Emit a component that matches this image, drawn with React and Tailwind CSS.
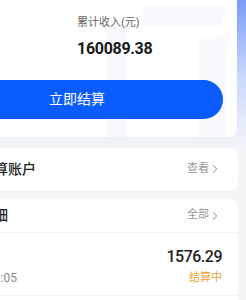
import { ChevronRight } from 'lucide-react';

const font = { fontFamily: 'Roboto, "Noto Sans CJK SC", sans-serif' };

const Watermark = () => (
  <svg className="absolute right-0 top-0" width="150" height="137" viewBox="0 0 150 137" fill="none">
    <path d="M20 26 h20 v111 h-20 z" fill="#f7f9fd" />
    <path d="M56 6 h84 l-6 20 h-78 z" fill="#f8f9fd" />
    <path d="M112 40 l28 -8 v105 h-28 z" fill="#f8fafd" />
  </svg>
);

const More = ({ label }) => (
  <div className="flex items-center text-[11px] text-[#999]">
    <span>{label}</span>
    <ChevronRight size={14} strokeWidth={1.3} className="ml-[-1px] text-[#666]" />
  </div>
);

const Row = ({ title, time, amount, status }) => (
  <div className="flex justify-between px-4 pt-[13px] h-[63px] border-b border-[#f3f3f3]">
    <div className="flex flex-col">
      <span className="text-[14px] leading-[22px] text-[#222]">{title}</span>
      <div className="w-[65px] flex justify-end whitespace-nowrap mt-[2px] text-[12px] leading-[16px] text-[#888]">
        {time}
      </div>
    </div>
    <div className="flex flex-col items-end">
      <span className="text-[16px] leading-[22px] font-medium tracking-[-0.5px] text-[#1f1f1f]">{amount}</span>
      <span className="mt-[2px] text-[11px] leading-[16px] text-[#f0a03c]">{status}</span>
    </div>
  </div>
);

export default function App() {
  return (
    <div className="relative w-[246px] h-[300px] overflow-hidden bg-[#f4f5f7]" style={font}>
      <div className="absolute inset-x-0 top-0 h-[150px] bg-gradient-to-b from-[#7b9cf6] via-[#c9d7fb] to-[#f4f5f7]" />
      <div className="relative ml-[-64px] w-[302px]">
        <div className="relative w-[301px] h-[137px] bg-white rounded-b-[8px] overflow-hidden">
          <Watermark />
          <div className="relative pl-[141px] pt-[16px]">
            <div className="text-[11px] leading-[14px] text-[#666]">累计收入(元)</div>
            <div className="mt-[8px] text-[16px] leading-[22px] font-bold tracking-[-0.3px] text-[#1a1a1a]">160089.38</div>
          </div>
          <button className="relative mt-[20px] ml-[-5px] w-[292px] h-[39px] rounded-full bg-[#0b5cff] text-white text-[14px] flex items-center justify-center">
            立即结算
          </button>
        </div>

        <div className="mt-[11px] h-[42px] rounded-[8px] bg-white flex items-center justify-between px-4">
          <span className="text-[14px] font-medium text-[#222]">我的结算账户</span>
          <More label="查看" />
        </div>

        <div className="mt-[9px] rounded-t-[8px] bg-white">
          <div className="h-[34px] flex items-center justify-between px-4 border-b border-[#f3f3f3]">
            <span className="text-[14px] font-medium text-[#222]">收入明细</span>
            <More label="全部" />
          </div>
          <Row title="提现" time="2024-06-18 14:32:05" amount="1576.29" status="结算中" />
          <Row title="提现" time="2024-06-11 09:12:40" amount="2380.00" status="已结算" />
        </div>
      </div>
    </div>
  );
}
